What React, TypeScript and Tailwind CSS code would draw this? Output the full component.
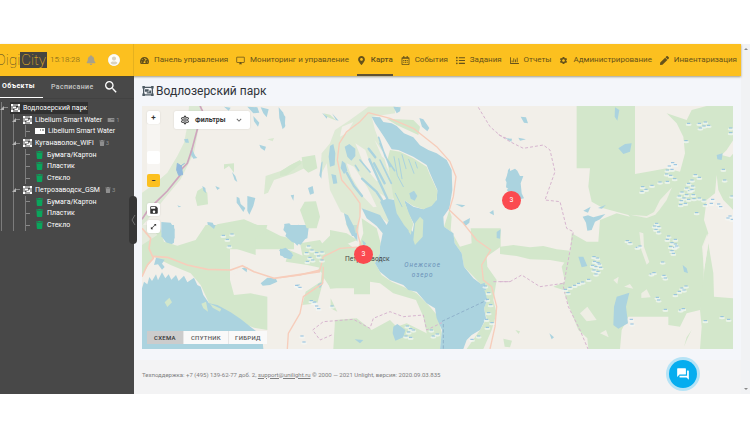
import type { ReactNode } from 'react'
import { FaTachometerAlt, FaMapMarkerAlt, FaRegCalendarAlt, FaListUl, FaRegChartBar, FaPen, FaBell, FaTrash, FaUserCircle } from 'react-icons/fa'
import { MdSave, MdOpenInFull, MdSearch, MdQuestionAnswer, MdKeyboardArrowDown, MdSettings, MdOutlineSettings, MdOutlineDesktopWindows } from 'react-icons/md'

const NAV: Array<{ icon: ReactNode; label: string; active?: boolean }> = [
  { icon: <FaTachometerAlt />, label: 'Панель управления' },
  { icon: <MdOutlineDesktopWindows />, label: 'Мониторинг и управление' },
  { icon: <FaMapMarkerAlt />, label: 'Карта', active: true },
  { icon: <FaRegCalendarAlt />, label: 'События' },
  { icon: <FaListUl />, label: 'Задания' },
  { icon: <FaRegChartBar />, label: 'Отчеты' },
  { icon: <MdSettings />, label: 'Администрирование' },
  { icon: <FaPen />, label: 'Инвентаризация' },
]

type NodeKind = 'group' | 'sensor' | 'bin'

const TREE: Array<{ level: number; kind: NodeKind; label: string; badge?: NodeKind; count?: number }> = [
  { level: 0, kind: 'group', label: 'Водлозерский парк' },
  { level: 1, kind: 'group', label: 'Libelium Smart Water', badge: 'sensor', count: 1 },
  { level: 2, kind: 'sensor', label: 'Libelium Smart Water' },
  { level: 1, kind: 'group', label: 'Куганаволок_WiFi', badge: 'bin', count: 3 },
  { level: 2, kind: 'bin', label: 'Бумага/Картон' },
  { level: 2, kind: 'bin', label: 'Пластик' },
  { level: 2, kind: 'bin', label: 'Стекло' },
  { level: 1, kind: 'group', label: 'Петрозаводск_GSM', badge: 'bin', count: 3 },
  { level: 2, kind: 'bin', label: 'Бумага/Картон' },
  { level: 2, kind: 'bin', label: 'Пластик' },
  { level: 2, kind: 'bin', label: 'Стекло' },
]

// short blue strokes that mark the bogs
const BOGS: Array<[number, number]> = [
  [1672, 52], [1690, 48], [1686, 60], [1675, 66], [1700, 58], [1766, 66], [1766, 80], [1640, 52], [1632, 104],
  [1592, 170], [1582, 180], [1600, 176], [1576, 192], [1590, 190], [1574, 204], [1586, 208], [1576, 226], [1598, 218],
  [1502, 242], [1512, 250], [1500, 256], [1530, 238], [1554, 228],
  [1660, 206], [1672, 214], [1650, 222], [1640, 232], [1652, 240], [1634, 246], [1644, 254], [1620, 258], [1634, 266],
  [1612, 270], [1626, 276], [1650, 250], [1654, 266], [1640, 280], [1618, 284], [1630, 292], [1616, 296], [1656, 278],
  [1672, 276], [1686, 282], [1690, 296], [1664, 320], [1712, 280], [1708, 292], [1730, 294], [1736, 302], [1764, 330],
  [1770, 340], [1758, 336], [1748, 222], [1744, 190], [1770, 270],
  [1544, 352], [1550, 362], [1542, 370], [1550, 378], [1538, 360], [1580, 390], [1576, 400], [1590, 410], [1600, 400],
  [1586, 422], [1598, 424], [1590, 434], [1600, 414], [1594, 442], [1604, 420], [1456, 404], [1464, 410], [1486, 424], [1494, 420],
  [1356, 452], [1366, 456], [1358, 466], [1368, 470], [1352, 478], [1362, 482], [1372, 474], [1356, 492], [1368, 496], [1376, 484], [1362, 504],
  [1528, 504], [1536, 500], [1562, 468], [1566, 508], [1570, 516], [1620, 546], [1626, 552], [1632, 540], [1612, 556], [1600, 566],
  [1546, 574], [1550, 582], [1570, 610], [1616, 612], [1624, 608], [1690, 644], [1760, 640], [1740, 632], [1468, 640], [1470, 654],
  [1270, 550], [1284, 544], [1298, 538], [1310, 532], [1322, 528], [1340, 520], [1278, 560],
  [500, 420], [510, 432], [494, 440], [524, 440], [530, 450], [504, 454], [540, 438], [496, 466], [512, 462], [540, 462],
  [508, 584], [516, 590], [524, 600], [530, 608], [796, 660], [806, 668], [800, 678], [814, 672], [792, 690], [806, 694],
  [874, 690], [886, 684], [868, 672], [1030, 540], [1040, 560], [1036, 580], [1046, 596], [1040, 620], [1034, 640], [1050, 650], [1036, 664], [1010, 690], [990, 700],
  [244, 388], [256, 400], [270, 384], [262, 420], [464, 538], [474, 544], [518, 588], [480, 690], [486, 708], [570, 600],
]

function GroupIcon({ className }: { className: string }) {
  return (
    <svg viewBox="0 0 18 16" className={className} fill="currentColor" aria-hidden="true">
      <path fillRule="evenodd" d="M0 0h4v1h10V0h4v4h-1v8h1v4h-4v-1H4v1H0v-4h1V4H0zM4 3v1H3v8h1v1h10v-1h1V4h-1V3z" />
      <path d="M4 5h6v4H4zM11 7h3v5H7v-2h4z" />
    </svg>
  )
}

function SensorIcon({ className }: { className: string }) {
  return (
    <svg viewBox="0 0 20 12" className={className} fill="currentColor" aria-hidden="true">
      <path fillRule="evenodd" d="M0 0h20v12H0zM10 3v2h2V3zM14 3v2h4V3z" />
    </svg>
  )
}

function NodeIcon({ kind }: { kind: NodeKind }) {
  if (kind === 'group') return <GroupIcon className="w-[9px] h-2 text-white" />
  if (kind === 'sensor') return <SensorIcon className="w-[10px] h-[6px] text-white" />
  return <FaTrash className="w-[9px] h-2 text-[#0aa55c]" />
}

function Header() {
  return (
    <header className="relative z-10 flex h-8 bg-[#fcc01f] shadow-[0_1px_2px_rgba(80,70,20,0.5)]">
      <div className="flex w-[134px] shrink-0 items-center overflow-hidden border-r border-[#e5b11f]">
        <a href="#" className="-ml-1 flex items-center text-[15px] leading-4 font-thin text-[#4a4228]">
          <span>Digi</span>
          <span className="bg-[#454440] px-px text-[#fcc01f]">City</span>
        </a>
        <time className="ml-[3px] text-[8px] font-light text-[#6f5a1c]">15:18:28</time>
        <button type="button" aria-label="Уведомления" className="ml-[6px] text-[#a8a18a]">
          <FaBell className="size-[10px]" />
        </button>
        <button type="button" aria-label="Профиль" className="ml-3 rounded-full bg-[#d9d2c0] text-[#fffdf6]">
          <FaUserCircle className="size-3" />
        </button>
      </div>
      <nav className="flex flex-1 justify-between pr-1 pl-[6px] text-[8px] text-[#66521a]">
        {NAV.map((item) => (
          <a
            key={item.label}
            href="#"
            className={`flex items-center gap-[5px] whitespace-nowrap border-b-2 pt-[2px] [&>svg]:size-[9px] ${
              item.active ? 'border-[#5e5233] font-medium' : 'border-transparent'
            }`}
          >
            {item.icon}
            {item.label}
          </a>
        ))}
      </nav>
    </header>
  )
}

function Sidebar() {
  return (
    <aside className="relative w-[134px] shrink-0 bg-[#484848] text-white">
      <div className="flex h-[23px] border-b border-[#424242] text-[7px] tracking-wider">
        <button type="button" className="w-[43px] border-b border-white pl-[2px] text-left font-bold">Объекты</button>
        <button type="button" className="w-[60px] pl-2 text-left font-medium text-[#c9c9c9]">Расписание</button>
        <button type="button" aria-label="Поиск">
          <MdSearch className="size-4" />
        </button>
      </div>
      <ul className="mt-[3px] grid h-[129px] auto-rows-fr pl-px text-[7px] leading-[10px]">
        {TREE.map((node, i) => (
          <li key={i} className="flex items-stretch">
            {Array.from({ length: node.level }, (_, n) => (
              <span key={n} className="w-3 border-l border-[#7c7c7c]" />
            ))}
            <span className="flex w-[9px] items-center border-l border-[#7c7c7c]">
              {node.kind === 'group' && (
                <svg viewBox="0 0 4 4" className="-ml-[2px] size-1 shrink-0 fill-[#b5b5b5]"><path d="M4 0v4H0z" /></svg>
              )}
              <span className="h-px w-1 bg-[#8a8a8a]" />
            </span>
            <span className={`flex items-center gap-[3px] pl-px pr-px whitespace-nowrap ${i === 0 ? 'bg-[#313131]' : ''}`}>
              <NodeIcon kind={node.kind} />
              {node.label}
            </span>
            {node.badge && (
              <span className="ml-1 flex items-center gap-px text-[6px] text-[#8f8f8f]">
                {node.badge === 'sensor' ? <SensorIcon className="h-1 w-2" /> : <FaTrash className="size-[6px]" />}
                {node.count}
              </span>
            )}
          </li>
        ))}
      </ul>
      <button
        type="button"
        aria-label="Свернуть панель"
        className="absolute top-[120px] -right-[3px] z-10 flex h-12 w-2 items-center justify-center rounded-sm bg-[#363636] text-[#6d6d6d]"
      >
        <svg viewBox="0 0 6 12" className="h-3 w-[6px] fill-none stroke-current"><path d="M5 1 2 6l3 5" /></svg>
      </button>
    </aside>
  )
}

function NorthWest() {
  return (
    <g transform="translate(-24 -90)">
      <g fill="#d3e7cb">
        <path d="M165 90H205L195 150 180 230 140 310 90 370 50 420 24 450V350L60 325 100 290 130 240 150 200 160 150Z" opacity=".7" />
        <path d="M190 345L205 335 220 350 222 385 190 390 184 365ZM270 265L300 262 300 290 285 270 270 280ZM215 520V470L250 445 330 430 400 460 440 480 480 490V520Z" />
        <path d="M395 300L440 285 480 262 520 250V272L480 292 420 312 402 350 390 355ZM400 190L420 186 416 196Z" opacity=".8" />
      </g>
      <g fill="#abd3df">
        <path d="M82 438L110 440 122 460 120 500 104 510 82 480ZM270 92L290 95 284 104ZM150 190L162 188 165 200 155 200ZM172 215L184 240 190 246 178 248 168 232Z" />
        <path d="M130 388L142 392 134 394ZM205 330L214 336 216 352 208 344ZM244 330L258 336 250 342ZM294 288L304 300 310 318 302 312ZM308 362L316 366 320 384 334 396 328 408 314 388 308 380ZM340 360L364 366 358 390 346 416 340 404Z" />
        <path d="M220 438L236 440 242 452 232 460 222 450ZM376 206L396 212 392 224 380 216ZM340 92L370 94 376 110 358 112ZM358 120L376 140 372 152 360 136ZM380 94L404 100 398 124 388 112ZM434 94L448 110 454 150 446 160 436 126Z" />
      </g>
      <path d="M198 90L205 104 190 160 174 220 160 262 142 280 138 298 100 345 62 382 40 405 24 430" fill="none" stroke="#cfa5bd" strokeWidth="5" />
      <path d="M130 262L142 270 146 296 134 298 128 282ZM140 270L152 262" fill="#93b9dc" stroke="#93b9dc" strokeWidth="3" />
    </g>
  )
}

function SouthWest() {
  return (
    <g transform="translate(-24 357)">
      <g fill="#d3e7cb">
        <path d="M24 0H75L90 50 130 62 185 45 215 0H400L395 20 365 40 365 90 288 65V165L300 210 350 205 400 215V315L360 308 300 285 230 245 200 180 170 145 110 120 60 95 24 150Z" />
        <path d="M455 110L465 75 520 98 560 60 590 30 620 40 660 70V190H590L570 160 550 235 505 240 515 200 560 170 565 130 520 120ZM605 285H670V372H600ZM590 220L610 260 590 250Z" />
      </g>
      <path d="M24 0H50L70 30 24 60ZM290 110L318 122 300 150Z" fill="#f2efe9" opacity=".6" />
      <g fill="#abd3df">
        <path d="M24 190L30 170 40 178 46 156 54 168 66 148 72 166 84 142 94 160 104 148 112 164 126 150 134 168 150 152 160 172 180 158 190 180 200 185 208 210 225 235 250 240 290 262 320 282 355 310 375 325 385 340 388 372H24Z" />
        <path d="M66 98L92 104 84 116 92 126 84 134 72 118 60 120ZM85 0H120L122 40 105 50 82 35ZM452 0H525L520 40 500 46 490 62 470 40 448 15ZM435 75L455 68 475 85 472 102 450 98Z" />
        <path d="M380 175L400 158 425 160 430 170 408 180 386 182ZM323 130L340 126 338 142ZM550 180L568 172 558 190ZM225 0H245L240 12ZM640 0H670V50L650 20ZM485 180L498 178 492 188Z" />
      </g>
      <path d="M92 232L106 218 114 232 100 246ZM202 236L216 230 222 260 208 250ZM228 236L262 252 258 260 236 248Z" fill="#d3e7cb" />
      <g fill="none" stroke="#f7cdbb" strokeWidth="5" strokeLinejoin="round">
        <path d="M24 155L40 120 58 100 45 70 50 40 24 10M58 94L100 97 160 120 220 133 290 135 325 122 360 140 420 160 500 148 558 140" />
      </g>
    </g>
  )
}

function Centre() {
  return (
    <g transform="translate(414 -18)">
      <g fill="#d3e7cb">
        <path d="M130 470L150 455 200 450 235 440 250 400 245 355 290 385 302 430 300 460 285 490 305 525 335 545 370 560 410 580 450 620 475 650 485 700 480 747H455L440 700 430 650 408 600 340 580 300 550 270 545V583H222V545L200 560 150 566 140 530 115 510Z" />
        <path d="M60 330L74 305 108 304 120 350 110 385 80 385ZM65 172L105 165 112 205 85 218 70 205ZM0 215L30 196 60 180 65 190 20 225 0 228ZM150 390L200 400 232 420 180 440 150 430ZM60 430L120 420 140 450 100 490 70 480Z" />
        <path d="M165 660L230 655 275 690 330 660 350 680 380 670 440 700 470 747H160Z" />
        <path d="M125 160L150 130 165 90 210 60 265 20H345V40L310 45 275 50 285 90 300 130 320 200 340 240 350 290 330 300 300 280 326 330 326 370 300 350 245 325 240 345 235 400 210 400 180 330 150 270 140 190 120 230Z" opacity=".65" />
        <path d="M320 56L400 60 420 80 415 105 350 75ZM130 40L150 44 170 62 140 50Z" />
        <path d="M508 330L515 350 512 390 540 440 575 430 572 385H662V440L620 470 622 500 650 540 640 600 650 640 635 690 610 747H560L600 690 620 655 612 625 622 600 600 550 552 500 545 460 524 430 520 400 492 380Z" />
      </g>
      <path d="M200 190L222 200 262 262 290 320 280 322 250 290 214 230ZM226 130L256 150 270 190 300 240 290 244 254 200ZM284 120L304 150 322 160 330 190 306 170ZM186 80L220 66 200 100 180 110ZM170 330L192 340 200 372 180 360Z" fill="#f2efe9" />

      {/* onega */}
      <path
        d="M275 50L300 52 310 66 335 70 350 78 372 100 400 112 420 136 445 150 470 160 500 180 515 210 517 270 508 325 490 350 492 380 520 400 524 430 545 460 552 500 580 535 600 550 615 575 622 600 612 625 618 655 600 690 575 705 560 720 550 747H480L486 690 470 655 465 625 440 610 410 575 385 570 370 555 330 540 300 515 285 490 300 460 300 440 308 400 290 378 260 355 245 325 300 345 320 375 326 362 300 305 320 296 345 300 355 330 375 370 398 395 402 372 385 340 372 300 400 320 430 328 470 300 472 270 450 220 440 195 400 170 355 150 335 148 312 110 285 70Z"
        fill="#abd3df"
      />
      <path d="M330 150L360 155 400 175 440 200 450 225 472 272 470 300 455 318 430 328 400 318 372 300 385 335 400 372 392 398 372 375 350 340 340 290 330 230 322 180Z" fill="#d3e7cb" />
      <path d="M405 370L420 350 430 360 428 410 405 435 400 420ZM388 375L395 385 393 405 386 395Z" fill="#d3e7cb" />
      <path d="M388 280L402 272 412 288 404 302 392 296Z" fill="#abd3df" />
      <g fill="none" stroke="#abd3df" strokeLinecap="round">
        <path d="M200 218L222 258 246 288M268 178L296 240 322 296M266 146L286 172M246 236L290 276 312 310M282 190L314 250" strokeWidth="7" />
        <path d="M296 112L316 170 344 212M300 180L334 250M240 180L270 216M300 130L330 200M226 196L236 212" strokeWidth="5" />
        <path d="M366 164L378 206M386 178L402 220M342 170L352 226 370 260M356 176L366 236M406 186L412 204M346 280L366 320" strokeWidth="3" />
      </g>
      <g fill="#abd3df">
        <path d="M194 140L208 132 226 146 226 168 214 182 202 170ZM150 138L160 132 166 160 164 196 150 200 146 170ZM124 188L128 184 124 236 118 226ZM186 182L196 190 202 212 192 222 182 204ZM154 222L168 226 172 250 160 252ZM192 340L204 346 222 380 228 408 216 408 200 374ZM246 420L258 430 252 440Z" />
        <path d="M12 372L28 370 40 384 56 374 84 392 80 412 62 434 36 426 16 408 22 394ZM0 446L20 448 40 466 30 478 0 466ZM84 264L98 258 102 280 90 284ZM32 286L42 284 40 302ZM0 30L16 50 14 84 4 64ZM126 38L142 50 140 56ZM156 40L176 62 168 60ZM340 20L362 22 360 34 350 40ZM418 54L430 58 448 84 442 94 426 80Z" />
        <path d="M526 312L556 316 546 322ZM548 366L570 354 568 368 556 378ZM628 338L640 330 642 346ZM650 396L662 388 660 416 650 414ZM684 210L690 204V270L678 262ZM594 556L614 548 618 570 600 574ZM340 680L352 672 376 690 370 712 346 722 338 700ZM224 718L250 720 240 730ZM114 552L130 546 122 560Z" />
      </g>

      <g fill="none" stroke="#f7cdbb" strokeWidth="4" strokeLinejoin="round">
        <path d="M265 38L240 65 200 95 178 130 172 180 185 240 215 275 240 310 240 350 230 390 246 450" />
        <path d="M265 38L330 55 400 85 470 140 510 185 528 230 520 290 508 330 550 370 590 420 632 450 605 495 610 540 635 560 650 620 645 680 630 747" />
        <path d="M250 440L180 445 130 470 120 510 60 525 0 533M130 500L128 550 70 590 60 640 25 700 22 747" />
      </g>
      <g fill="none" stroke="#d7b5cf" strokeWidth="3" strokeDasharray="9 6">
        <path d="M155 705L120 720 98 690 130 665 220 658 270 685 280 655 330 635 370 650 430 645 440 690 486 668M595 22L630 80 660 106 690 120M640 545H690" />
      </g>
      <path d="M486 664L622 600M490 672V747" fill="none" stroke="#8fb2cb" strokeWidth="3" strokeDasharray="10 6" />
    </g>
  )
}

function East() {
  return (
    <g transform="translate(1074 -18)">
      <g fill="#d3e7cb">
        <path d="M230 18H405V222L460 212 500 205 540 215 555 160 550 110 530 70 500 40 560 60 575 30 620 18H700V120L680 150 665 165 690 172 700 160V330L670 300 655 270 650 225 645 280 620 300 612 360 625 400 610 440 612 590 600 630 560 640 540 680 505 675V650H385L365 690 360 747H265L262 715 235 690 215 640 190 570 160 560 195 545 185 500 210 460 215 400 260 425 295 425 300 360 350 340 390 350 385 345 310 325 275 305 265 260 270 205H230Z" />
        <path d="M614 500L625 430 640 520 642 590 700 595V747H600L605 680 600 630ZM0 440L40 435 90 442 130 438 170 448 210 452 205 490 150 480 90 478 50 468 0 462ZM10 716L36 722 30 742 14 740ZM46 690L60 694 56 702ZM575 690L560 712 552 740 562 716Z" />
      </g>
      <g fill="#f2efe9">
        <path d="M390 344L440 348 462 336 480 300 516 262 500 300 478 330 466 344 440 354ZM418 396L430 400 432 440 448 486 440 494 424 450ZM424 580L440 568 452 592 424 594ZM606 440L622 400 624 440 612 510ZM372 560L390 552 400 566ZM240 640L262 620 290 660 260 664ZM300 700L318 690 326 712ZM340 540L356 530 352 552Z" opacity=".85" />
      </g>
      <g fill="#abd3df">
        <path d="M350 590L388 578 378 620 384 670 355 686 340 675 342 620ZM235 470L250 470 262 498 245 502ZM248 350L264 346 280 352 316 342 300 358 285 365 275 390 262 392 258 368ZM250 332L272 320 264 338ZM294 324L318 314 306 326Z" />
        <path d="M345 22L358 30 352 62 344 50ZM355 145L375 132 395 130 390 155 370 162ZM548 495L560 505 564 520 552 515ZM25 215L45 206 52 212 60 228 70 228 62 250 65 280 72 295 50 300 20 270 30 262 16 240ZM62 50L78 52 84 70 72 68ZM16 115L36 116 34 125ZM55 113L78 118 60 122ZM650 165L668 160 665 180 652 178ZM148 700L162 712 155 718Z" />
      </g>
      <g fill="none" stroke="#d7b5cf" strokeWidth="3" strokeDasharray="9 6">
        <path d="M-4 104L30 125 70 145 130 135 150 150 165 215 135 300 180 305 200 385 220 395 205 480 190 560 205 620 240 690 264 747M0 545H30L65 525 120 560 190 550" />
      </g>
    </g>
  )
}

function MapCanvas() {
  return (
    <svg viewBox="0 0 1773 729" preserveAspectRatio="xMidYMid slice" className="absolute inset-0 size-full">
      <rect width="1773" height="729" fill="#f2efe9" />
      <NorthWest />
      <SouthWest />
      <Centre />
      <East />
      {BOGS.map(([x, y], i) => (
        <g key={i}>
          <ellipse cx={x} cy={y + 4} rx="9" ry="4" fill="#f4f8f5" opacity=".7" />
          <path d={`M${x - 5} ${y}h10`} stroke="#8fbfe0" strokeWidth="3" />
        </g>
      ))}
      <g fontFamily="Roboto, sans-serif">
        <text x="676" y="464" textAnchor="middle" fontSize="20" fill="#454545">
          Петрозаводск
        </text>
        <g fontSize="19" fontStyle="italic" fill="#6a91b8" textAnchor="middle" letterSpacing="3">
          <text x="842" y="484">Онежское</text>
          <text x="842" y="513">озеро</text>
        </g>
      </g>
    </svg>
  )
}

const MAP_BUTTON = 'flex size-[13px] items-center justify-center rounded-[2px] bg-white text-[#333] shadow-[0_0_2px_rgba(0,0,0,0.12)]'

function MapView() {
  return (
    <section className="relative h-[243px] overflow-hidden">
      <MapCanvas />
      <div className="absolute top-[5px] left-[5px] flex flex-col">
        <button type="button" aria-label="Приблизить" className={`${MAP_BUTTON} text-[8px] font-bold`}>+</button>
        <input
          type="range"
          aria-label="Масштаб"
          defaultValue={27}
          className="h-[50px] w-[13px] appearance-none bg-white/40 [direction:rtl] [writing-mode:vertical-lr] [&::-webkit-slider-thumb]:size-[13px] [&::-webkit-slider-thumb]:appearance-none [&::-webkit-slider-thumb]:rounded-[2px] [&::-webkit-slider-thumb]:bg-white"
        />
        <button type="button" aria-label="Отдалить" className="flex size-[13px] items-center justify-center rounded-[2px] bg-[#fcc01f] text-[8px] font-bold text-[#333]">−</button>
        <button type="button" aria-label="Сохранить" className={`${MAP_BUTTON} mt-4`}><MdSave className="size-[10px]" /></button>
        <button type="button" aria-label="Во весь экран" className={`${MAP_BUTTON} mt-1`}><MdOpenInFull className="size-[7px]" /></button>
      </div>
      <button
        type="button"
        className="absolute top-[5px] left-8 flex h-[18px] w-[76px] items-center rounded-[2px] bg-white pl-[6px] text-[7px] font-bold text-[#333] shadow-[0_0_2px_rgba(0,0,0,0.12)]"
      >
        <MdOutlineSettings className="mr-[5px] size-[10px]" />
        Фильтры
        <MdKeyboardArrowDown className="mr-[6px] ml-auto size-[10px] text-[#666]" />
      </button>
      <button type="button" className="absolute top-[85px] left-[360px] size-[19px] rounded-full bg-[#fb4a50] text-[7px] text-white">3</button>
      <button type="button" className="absolute top-[139px] left-[212px] size-[19px] rounded-full bg-[#fb4a50] text-[7px] text-white">3</button>
      <div className="absolute bottom-[5px] left-[5px] flex h-[13px] divide-x divide-[#e6e6e6] bg-[#f9f9f9] text-[6px] font-medium tracking-wider text-[#5a5a5a]">
        <button type="button" className="bg-[#cccccc] px-[7px] text-[#333]">СХЕМА</button>
        <button type="button" className="px-[7px]">СПУТНИК</button>
        <button type="button" className="px-[6px]">ГИБРИД</button>
      </div>
    </section>
  )
}

export default function App() {
  return (
    <div className="bg-white py-11 font-['Roboto',sans-serif]">
      <div className="flex">
        <div className="min-w-0 flex-1">
          <Header />
          <div className="flex">
            <Sidebar />
            <main className="min-w-0 flex-1 bg-[#f4f6fa] pl-2">
              <h1 className="flex h-[30px] items-center gap-[2px] text-[12px] text-[#2f3338]">
                <GroupIcon className="h-[10px] w-3 text-[#4d5a63]" />
                Водлозерский парк
              </h1>
              <div className="pr-2">
                <MapView />
              </div>
              <footer className="relative -ml-2 mt-[11px] flex h-[34px] items-center bg-[#f3f3f4] pb-[6px] pl-2 text-[6px] text-[#808080]">
                <p>
                  Техподдержка: +7 (495) 139-62-77 доб. 2, <a href="mailto:support@unilight.ru" className="underline">support@unilight.ru</a> © 2000 — 2021 Unlight, версия: 2020.09.03.835
                </p>
                <button
                  type="button"
                  aria-label="Чат"
                  className="absolute right-11 bottom-[6px] flex size-7 items-center justify-center rounded-full bg-[#05adef] text-white ring-3 ring-[#b5e3f6]"
                >
                  <MdQuestionAnswer className="size-[14px]" />
                </button>
              </footer>
            </main>
          </div>
        </div>
        <div className="flex w-[9px] shrink-0 flex-col items-center justify-between bg-[#f1f2f4] py-1">
          <svg viewBox="0 0 4 2" className="h-[2px] w-1 fill-[#8a8a8a]"><path d="M0 2 2 0l2 2z" /></svg>
          <svg viewBox="0 0 4 2" className="h-[2px] w-1 fill-[#8a8a8a]"><path d="M0 0h4L2 2z" /></svg>
        </div>
      </div>
    </div>
  )
}
